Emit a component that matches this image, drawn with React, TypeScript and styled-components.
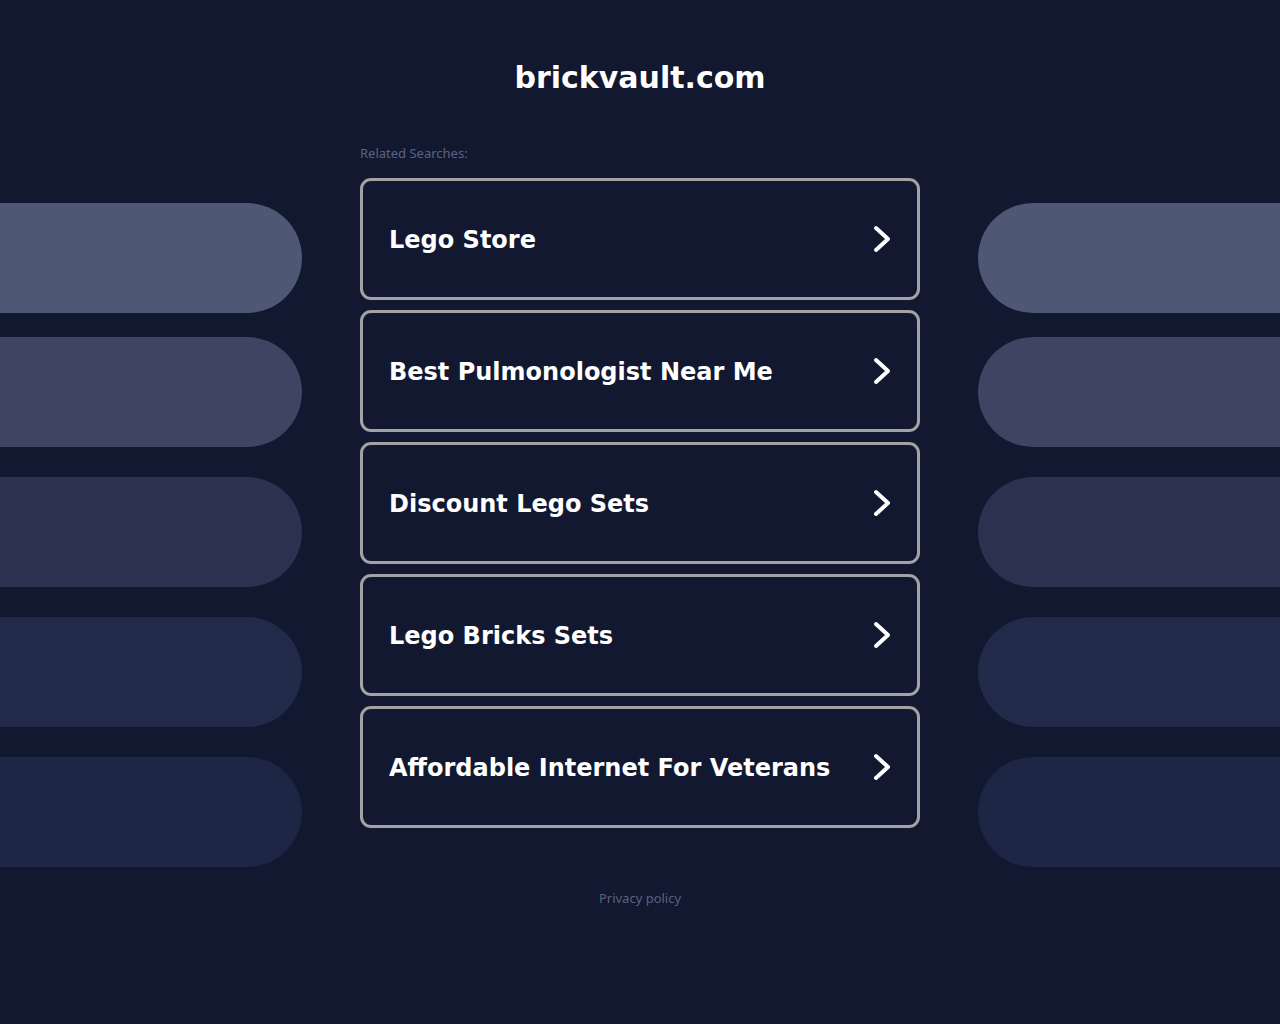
import styled, { createGlobalStyle } from "styled-components";

const GlobalStyle = createGlobalStyle`
  html, body {
    margin: 0;
    padding: 0;
    background-color: #121830;
  }
  body {
    min-height: 100vh;
    font-family: "DejaVu Sans", "Liberation Sans", sans-serif;
  }
`;

const Page = styled.div`
  min-height: 1024px;
  background-color: #121830;
  display: flex;
  flex-direction: column;
`;

const Header = styled.header`
  padding-top: 60px;
  display: flex;
  justify-content: center;
`;

const SiteTitle = styled.h1`
  margin: 0;
  font-size: 30px;
  line-height: 36px;
  font-weight: bold;
  color: #ffffff;
`;

const Main = styled.main`
  margin-top: 50px;
  display: grid;
  grid-template-columns: 1fr 560px 1fr;
  column-gap: 58px;
`;

const SideColumn = styled.div<{ $side: "left" | "right" }>`
  padding-top: 57px;
  display: flex;
  flex-direction: column;
  align-items: ${(p) => (p.$side === "left" ? "flex-start" : "flex-end")};
`;

const Pill = styled.div<{ $side: "left" | "right"; $color: string; $top: number }>`
  width: 100%;
  height: 110px;
  margin-top: ${(p) => p.$top}px;
  background-color: ${(p) => p.$color};
  border-radius: ${(p) =>
    p.$side === "left" ? "0 55px 55px 0" : "55px 0 0 55px"};
`;

const Center = styled.div`
  display: flex;
  flex-direction: column;
`;

const Label = styled.div`
  font-family: "Noto Sans", "Open Sans", sans-serif;
  font-size: 13px;
  line-height: 14px;
  color: #5c6382;
  margin-bottom: 18px;
`;

const Card = styled.a`
  box-sizing: border-box;
  height: 122px;
  margin-bottom: 10px;
  border: 3px solid #a3a3a6;
  border-radius: 11px;
  padding: 0 24px 0 26px;
  display: flex;
  align-items: center;
  justify-content: space-between;
  text-decoration: none;
  cursor: pointer;
`;

const CardText = styled.span`
  font-size: 24px;
  line-height: 30px;
  padding-top: 2px;
  font-weight: bold;
  color: #ffffff;
`;

const Footer = styled.footer`
  padding-top: 23px;
  display: flex;
  justify-content: center;
`;

const FooterLink = styled.a`
  font-family: "Noto Sans", "Open Sans", sans-serif;
  font-size: 13px;
  line-height: 16px;
  color: #5a6080;
  text-decoration: none;
`;

const Chevron = () => (
  <svg width="22" height="30" viewBox="0 0 22 30" fill="none">
    <polyline
      points="5,4 17,15 5,26"
      stroke="#ffffff"
      strokeWidth="4"
      strokeLinecap="round"
      strokeLinejoin="round"
    />
  </svg>
);

const pills = [
  { color: "#4e5773", top: 0 },
  { color: "#3d4562", top: 24 },
  { color: "#2b3250", top: 30 },
  { color: "#212a49", top: 30 },
  { color: "#1e2645", top: 30 },
];

const searches = [
  "Lego Store",
  "Best Pulmonologist Near Me",
  "Discount Lego Sets",
  "Lego Bricks Sets",
  "Affordable Internet For Veterans",
];

export default function App() {
  return (
    <Page>
      <GlobalStyle />
      <Header>
        <SiteTitle>brickvault.com</SiteTitle>
      </Header>
      <Main>
        <SideColumn $side="left">
          {pills.map((p, i) => (
            <Pill key={i} $side="left" $color={p.color} $top={p.top} />
          ))}
        </SideColumn>
        <Center>
          <Label>Related Searches:</Label>
          {searches.map((s) => (
            <Card key={s}>
              <CardText>{s}</CardText>
              <Chevron />
            </Card>
          ))}
        </Center>
        <SideColumn $side="right">
          {pills.map((p, i) => (
            <Pill key={i} $side="right" $color={p.color} $top={p.top} />
          ))}
        </SideColumn>
      </Main>
      <Footer>
        <FooterLink>Privacy policy</FooterLink>
      </Footer>
    </Page>
  );
}
